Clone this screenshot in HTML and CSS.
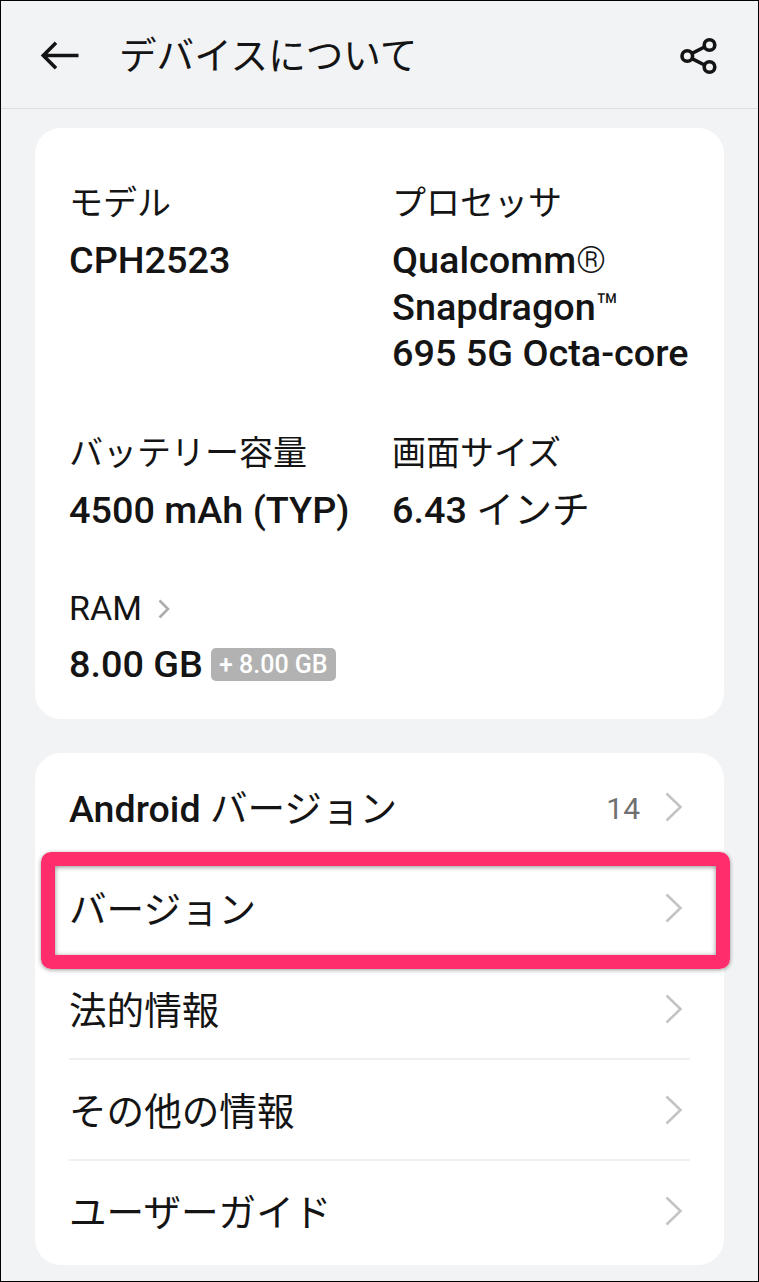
FILE: index.html
```html
<!DOCTYPE html>
<html lang="ja">
<head>
    <meta charset="UTF-8">
    <title>デバイスについて</title>
    <link rel="stylesheet" href="styles.css">
</head>
<body>
<div class="screen">
    <div class="header">
        <svg class="back" width="40" height="32" viewBox="0 0 40 32"><path d="M39.500 15.500H4.500M17 2.700L4.300 15.500l12.700 12.800"/></svg>
        <h1>デバイスについて</h1>
        <svg class="share" width="40" height="40" viewBox="0 0 40 40">
            <path d="M13 17.300L25.500 11M13 22.700L25.500 29"/>
            <circle cx="8.300" cy="20" r="5.300"/>
            <circle cx="30.500" cy="9" r="5.300"/>
            <circle cx="30.500" cy="31" r="5.300"/>
        </svg>
    </div>

    <div class="card specs">
        <div class="spec">
            <div class="label">モデル</div>
            <div class="value">CPH2523</div>
        </div>
        <div class="spec">
            <div class="label">プロセッサ</div>
            <div class="value">Qualcomm<span class="reg">®</span><br>Snapdragon<span class="tm">™</span><br>695 5G Octa-core</div>
        </div>
        <div class="spec">
            <div class="label">バッテリー容量</div>
            <div class="value">4500 mAh (TYP)</div>
        </div>
        <div class="spec">
            <div class="label">画面サイズ</div>
            <div class="value">6.43 <span class="ja">インチ</span></div>
        </div>
        <div class="spec ram">
            <div class="label">RAM <svg class="more" width="12" height="20" viewBox="0 0 12 20"><path d="M1.500 1.500L10 10l-8.500 8.500"/></svg></div>
            <div class="value">8.00 GB<span class="badge">+ 8.00 GB</span></div>
        </div>
    </div>

    <ul class="card list">
        <li>
            <span class="name">Android <span class="ja">バージョン</span></span>
            <span class="num">14</span>
            <svg class="arrow" width="18" height="30" viewBox="0 0 18 30"><path d="M1.500 1.500L15.500 15l-14 13.500"/></svg>
        </li>
        <li class="current">
            <span class="name ja">バージョン</span>
            <svg class="arrow" width="18" height="30" viewBox="0 0 18 30"><path d="M1.500 1.500L15.500 15l-14 13.500"/></svg>
        </li>
        <li>
            <span class="name ja">法的情報</span>
            <svg class="arrow" width="18" height="30" viewBox="0 0 18 30"><path d="M1.500 1.500L15.500 15l-14 13.500"/></svg>
        </li>
        <li>
            <span class="name ja">その他の情報</span>
            <svg class="arrow" width="18" height="30" viewBox="0 0 18 30"><path d="M1.500 1.500L15.500 15l-14 13.500"/></svg>
        </li>
        <li>
            <span class="name ja">ユーザーガイド</span>
            <svg class="arrow" width="18" height="30" viewBox="0 0 18 30"><path d="M1.500 1.500L15.500 15l-14 13.500"/></svg>
        </li>
    </ul>
</div>
</body>
</html>
```
FILE: styles.css
```css
* {
    padding: 0;
    margin: 0;
    list-style: none;
    box-sizing: border-box;
}

body {
    font-family: Roboto, "Noto Sans CJK JP", sans-serif;
    color: #141414;
}

svg {
    fill: none;
    flex: none;
}

.screen {
    width: 759px;
    height: 1282px;
    border: 1px solid #000;
    background: #f2f3f5;
    overflow: hidden;
}

.header {
    display: flex;
    align-items: center;
    height: 108px;
    padding: 2px 39px 0 38px;
    border-bottom: 1px solid #dcdddf;
}

.header h1 {
    flex: 1;
    margin-left: 40px;
    padding-top: 1px;
    font-size: 37.6px;
    font-weight: 400;
    line-height: 54px;
}

.back {
    stroke: #141414;
    stroke-width: 3.6;
}

.share {
    stroke: #141414;
    stroke-width: 3.6;
}

.card {
    width: 689px;
    margin-left: 34px;
    background: #fff;
    border-radius: 26px;
}

.specs {
    display: grid;
    grid-template-columns: 323px 300px;
    grid-template-rows: 250px 155px auto;
    height: 591px;
    margin-top: 19px;
    padding: 53px 0 0 34px;
}

.label {
    height: 44px;
    font-size: 34px;
    line-height: 44px;
    white-space: nowrap;
}

.value {
    margin-top: 12px;
    font-size: 37.8px;
    font-weight: 500;
    line-height: 46.7px;
    white-space: nowrap;
}

.ram .value {
    margin-top: 11px;
}

.tm, .ja {
    font-weight: 400;
}

.reg {
    font-weight: 350;
}

.more {
    margin-left: 8px;
    stroke: #adadad;
    stroke-width: 2.6;
    vertical-align: 1px;
}

.badge {
    display: inline-block;
    height: 33px;
    margin-left: 8px;
    padding: 0 8px;
    border-radius: 5px;
    background: #b2b2b2;
    color: #fff;
    font-size: 25px;
    line-height: 34px;
    vertical-align: 4px;
}

.list {
    height: 512px;
    margin-top: 34px;
    padding: 4px 34px 3px;
}

.list li {
    display: flex;
    align-items: center;
    position: relative;
    height: 101px;
    padding-right: 7px;
    border-bottom: 2px solid #f0f0f0;
}

.list li:last-child {
    border-bottom-color: transparent;
}

.name {
    flex: 1;
    padding-top: 4px;
    font-size: 37.6px;
    font-weight: 500;
    line-height: 54px;
}

.name.ja {
    font-weight: 400;
}

.num {
    margin-right: 25px;
    padding-top: 3px;
    color: #707070;
    font-size: 30px;
}

.arrow {
    stroke: #c4c4c4;
    stroke-width: 2.6;
}

/* red frame round the selected row */
.current:after {
    content: "";
    position: absolute;
    box-sizing: border-box;
    left: -28px;
    top: -6px;
    width: 689px;
    height: 117px;
    border: 14px solid #ff2d6b;
    border-radius: 10px;
    box-shadow: 0 1px 4px rgba(0, 0, 0, 0.4), inset 0 1px 5px rgba(0, 0, 0, 0.45);
}
```
